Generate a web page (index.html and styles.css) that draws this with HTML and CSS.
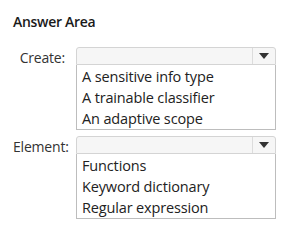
FILE: index.html
```html
<!DOCTYPE html>
<html lang="en">
<head>
    <meta charset="UTF-8">
    <title>Answer Area</title>
    <link rel="stylesheet" href="styles.css">
</head>
<body>
    <div class="area">
        <h1 class="title">Answer Area</h1>

        <div class="row row-create">
            <div class="label">Create:</div>
            <div class="dropdown">
                <div class="bar">
                    <span class="value"></span>
                    <span class="arrow"></span>
                </div>
                <ul class="options">
                    <li>A sensitive info type</li>
                    <li>A trainable classifier</li>
                    <li>An adaptive scope</li>
                </ul>
            </div>
        </div>

        <div class="row row-element">
            <div class="label">Element:</div>
            <div class="dropdown">
                <div class="bar">
                    <span class="value"></span>
                    <span class="arrow"></span>
                </div>
                <ul class="options">
                    <li>Functions</li>
                    <li>Keyword dictionary</li>
                    <li>Regular expression</li>
                </ul>
            </div>
        </div>
    </div>
</body>
</html>
```

FILE: styles.css
```css
body {
    margin: 0;
    background-color: #fff;
    font-family: 'Open Sans', 'Noto Sans', sans-serif;
    color: #222;
}

.area {
    padding: 12px 0 0 13px;
}

.title {
    margin: 0 0 16px 0;
    font-size: 14px;
    font-weight: 600;
    color: #1a1a1a;
    letter-spacing: -0.3px;
}

.row {
    display: flex;
    align-items: flex-start;
}

.row-element {
    margin-top: 6px;
}

.label {
    width: 52px;
    text-align: right;
    font-size: 14px;
    color: #333;
    padding-top: 1px;
    margin-right: 11px;
    letter-spacing: -0.2px;
}

.dropdown {
    width: 200px;
}

.bar {
    display: flex;
    height: 16px;
    border: 1px solid #d4d4d4;
    border-radius: 3px 3px 0 0;
    background-color: #f6f6f6;
}

.value {
    flex: 1;
}

.arrow {
    width: 22px;
    border-left: 1px solid #dcdcdc;
    position: relative;
}

.arrow::after {
    content: '';
    position: absolute;
    left: 6px;
    top: 5px;
    border-left: 5px solid transparent;
    border-right: 5px solid transparent;
    border-top: 6px solid #333;
}

.options {
    list-style: none;
    margin: 0;
    padding: 1px 0 0 5px;
    border: 1px solid #bdbdbd;
    border-top: none;
    width: 193px;
    font-size: 14.5px;
    line-height: 21px;
    color: #222;
    letter-spacing: -0.15px;
}
```
